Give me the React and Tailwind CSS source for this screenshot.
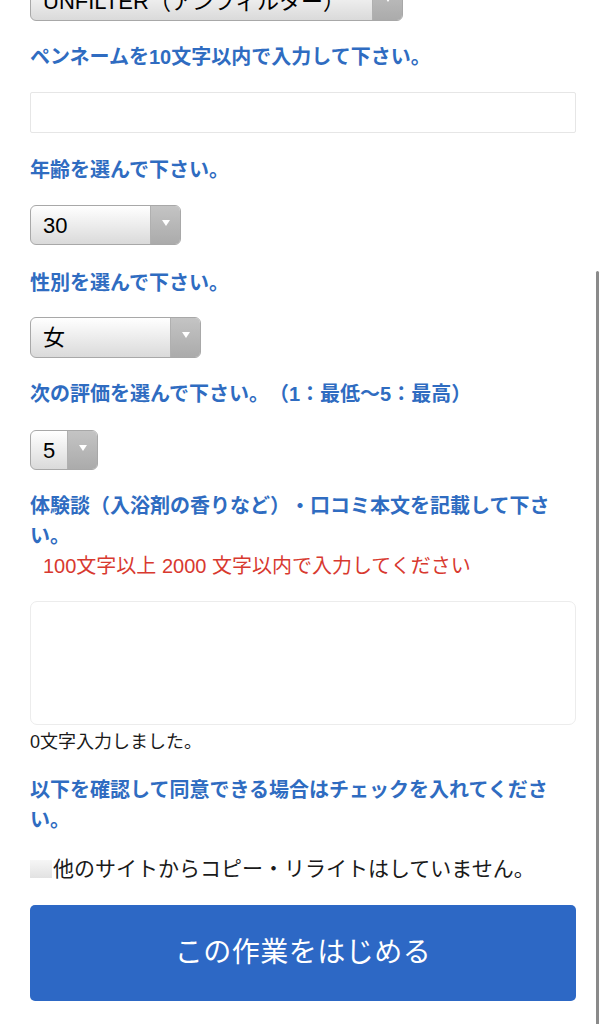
import React from 'react';

const font = { fontFamily: '"Liberation Sans", "Noto Sans CJK JP", sans-serif' };

function Label({ children }) {
  return (
    <p className="text-[20px] leading-[30px] font-bold text-[#2f6cc1] [text-spacing-trim:space-all]">
      {children}
    </p>
  );
}

function FakeSelect({ value, width, className = '' }) {
  return (
    <div
      className={`flex h-[40px] rounded-[6px] border border-[#a8a8a8] bg-linear-to-b from-white to-[#dadada] overflow-hidden ${className}`}
      style={{ width }}
    >
      <div className="flex-1 flex items-center pl-[12px] text-[22px] text-black whitespace-nowrap overflow-hidden [text-spacing-trim:space-all]">
        {value}
      </div>
      <div className="w-[30px] flex items-start justify-center pt-[13px] bg-linear-to-b from-[#c4c4c4] to-[#ababab] border-l border-[#b0b0b0]">
        <svg width="10" height="8" viewBox="0 0 10 8">
          <path d="M1 1 L9 1 L5 7 Z" fill="#ffffff" />
        </svg>
      </div>
    </div>
  );
}

export default function App() {
  return (
    <div className="relative bg-white h-[1024px] overflow-hidden" style={font}>
      <div className="px-[30px]">
        <FakeSelect value="UNFILTER（アンフィルター）" width={373} className="-mt-[19px]" />

        <div className="mt-[21px]">
          <Label>ペンネームを10文字以内で入力して下さい。</Label>
        </div>
        <div className="mt-[20px] h-[41px] border border-[#e6e6e6] rounded-[2px] bg-white" />

        <div className="mt-[22px]">
          <Label>年齢を選んで下さい。</Label>
        </div>
        <FakeSelect value="30" width={151} className="mt-[20px]" />

        <div className="mt-[23px]">
          <Label>性別を選んで下さい。</Label>
        </div>
        <FakeSelect value="女" width={171} className="mt-[19px] h-[41px]" />

        <div className="mt-[21px]">
          <Label>次の評価を選んで下さい。（1：最低〜5：最高）</Label>
        </div>
        <FakeSelect value="5" width={68} className="mt-[21px]" />

        <div className="mt-[21px]">
          <Label>体験談（入浴剤の香りなど）・口コミ本文を記載して下さい。</Label>
        </div>
        <p className="pl-[13px] text-[20px] leading-[30px] text-[#d8392f]">
          100文字以上 2000 文字以内で入力してください
        </p>

        <div className="mt-[20px] h-[124px] border border-[#ececec] rounded-[7px] bg-white" />
        <p className="mt-[2px] text-[18px] leading-[30px] text-[#1a1a1a]">0文字入力しました。</p>

        <div className="mt-[18px]">
          <Label>以下を確認して同意できる場合はチェックを入れてください。</Label>
        </div>

        <div className="mt-[19px] h-[30px] flex items-center">
          <span className="w-[22px] h-[18px] bg-linear-to-b from-[#f6f6f6] to-[#e2e2e2] mr-[1px]" />
          <span className="text-[21px] leading-[30px] text-[#1a1a1a] [text-spacing-trim:space-all]">
            他のサイトからコピー・リライトはしていません。
          </span>
        </div>

        <button className="mt-[21px] w-full h-[96px] rounded-[5px] bg-[#2d68c5] text-white text-[28px] tracking-[0.5px] flex items-center justify-center">
          この作業をはじめる
        </button>
      </div>

      <div className="absolute left-[596px] top-[271px] w-[3px] h-[760px] rounded-t-full bg-[#8a8a8a]" />
    </div>
  );
}
